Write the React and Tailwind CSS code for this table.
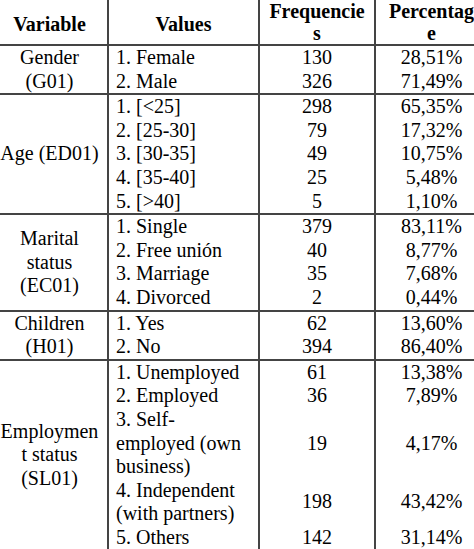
const groups = [
  {
    label: ["Gender", "(G01)"],
    rows: [
      ["1. Female", "130", "28,51%"],
      ["2. Male", "326", "71,49%"],
    ],
  },
  {
    label: ["Age (ED01)"],
    rows: [
      ["1. [<25]", "298", "65,35%"],
      ["2. [25-30]", "79", "17,32%"],
      ["3. [30-35]", "49", "10,75%"],
      ["4. [35-40]", "25", "5,48%"],
      ["5. [>40]", "5", "1,10%"],
    ],
  },
  {
    label: ["Marital", "status", "(EC01)"],
    rows: [
      ["1. Single", "379", "83,11%"],
      ["2. Free unión", "40", "8,77%"],
      ["3. Marriage", "35", "7,68%"],
      ["4. Divorced", "2", "0,44%"],
    ],
  },
  {
    label: ["Children", "(H01)"],
    rows: [
      ["1. Yes", "62", "13,60%"],
      ["2. No", "394", "86,40%"],
    ],
  },
  {
    label: ["Employmen", "t status", "(SL01)"],
    rows: [
      ["1. Unemployed", "61", "13,38%"],
      ["2. Employed", "36", "7,89%"],
      ["3. Self-employed (own business)", "19", "4,17%"],
      ["4. Independent (with partners)", "198", "43,42%"],
      ["5. Others", "142", "31,14%"],
    ],
  },
];

const serif = "font-['Liberation_Serif','Times_New_Roman',serif]";

export default function App() {
  return (
    <div className={`h-[549px] w-[474px] overflow-hidden bg-white text-black ${serif}`}>
      <table
        className={`w-[487px] table-fixed border-collapse text-[20px] text-black ${serif}`}
      >
        <colgroup>
          <col className="w-[108px]" />
          <col className="w-[151px]" />
          <col className="w-[116px]" />
          <col className="w-[112px]" />
        </colgroup>
        <thead>
          <tr className="border-b-2 border-[#444] font-bold leading-[22px]">
            <th className="h-[44px] pr-[8px] pt-[3px] text-center align-middle">Variable</th>
            <th className="border-l-2 border-[#444] pt-[3px] text-center align-middle">
              Values
            </th>
            <th className="border-l-2 border-[#444] text-center align-top">
              Frequencie
              <br />s
            </th>
            <th className="border-l-2 border-[#444] text-center align-top">
              Percentag
              <br />e
            </th>
          </tr>
        </thead>
        <tbody className="leading-[23.6px]">
          {groups.map((group, gi) =>
            group.rows.map((row, ri) => (
              <tr
                key={`${gi}-${ri}`}
                className={ri === 0 && gi > 0 ? "border-t-2 border-[#444]" : ""}
              >
                {ri === 0 && (
                  <td
                    rowSpan={group.rows.length}
                    className="pr-[8px] text-center align-middle"
                  >
                    {group.label.map((line, li) => (
                      <div key={li}>{line}</div>
                    ))}
                  </td>
                )}
                <td className="border-l-2 border-[#444] pl-[7px] pr-[8px] align-top">
                  {row[0]}
                </td>
                <td className="border-l-2 border-[#444] text-center align-middle">
                  {row[1]}
                </td>
                <td className="border-l-2 border-[#444] text-center align-middle">
                  {row[2]}
                </td>
              </tr>
            ))
          )}
        </tbody>
      </table>
    </div>
  );
}
